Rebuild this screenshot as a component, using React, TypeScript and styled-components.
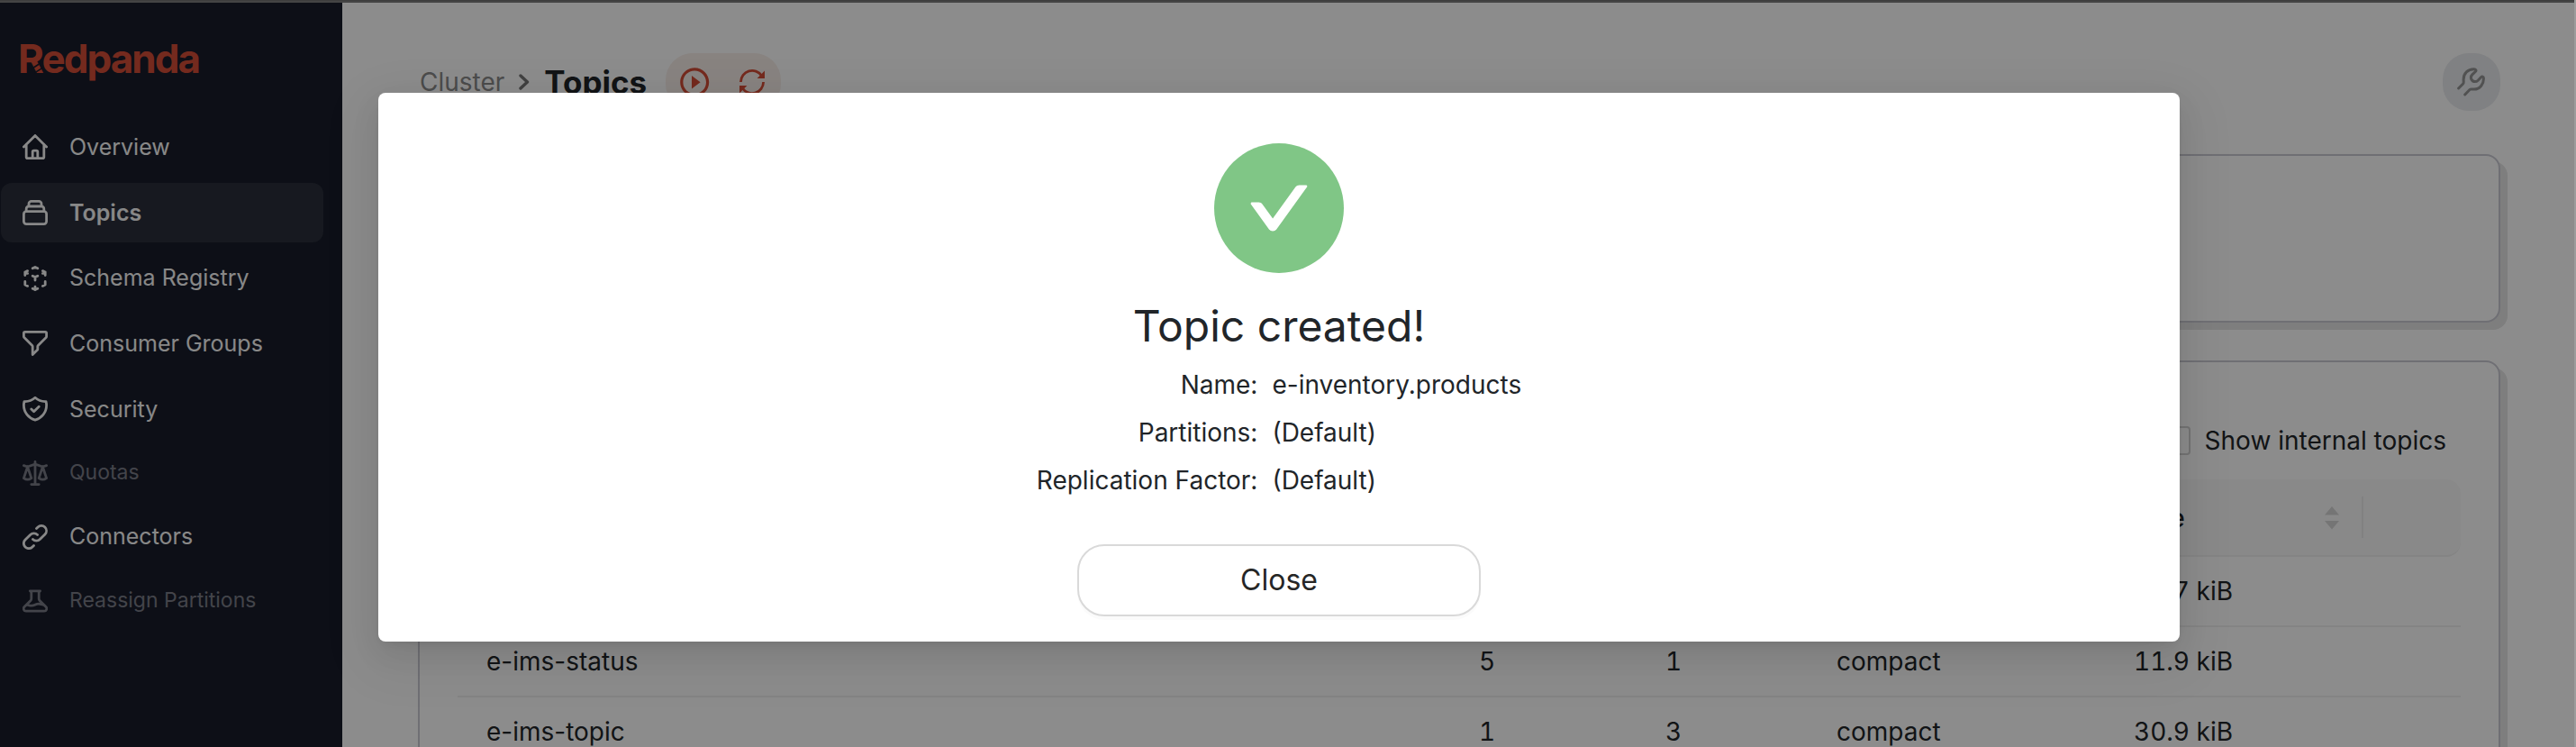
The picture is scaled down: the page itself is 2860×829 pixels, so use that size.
import type { ReactNode } from 'react';
import type { IconType } from 'react-icons';
import styled, { createGlobalStyle } from 'styled-components';
import {
  HiOutlineBeaker,
  HiOutlineCollection,
  HiOutlineCubeTransparent,
  HiOutlineFilter,
  HiOutlineHome,
  HiOutlineLink,
  HiOutlineScale,
  HiOutlineShieldCheck,
} from 'react-icons/hi';
import { MdPlayCircleOutline } from 'react-icons/md';

const GlobalStyle = createGlobalStyle`
  *, *::before, *::after {
    box-sizing: border-box;
  }
  body {
    margin: 0;
    font-family: Inter, sans-serif;
    font-size: 28px;
    line-height: 44px;
    color: #212529;
    background: #fff;
  }
`;

const Frame = styled.div`
  position: relative;
  display: flex;
  flex-direction: column;
  height: 829px;
  overflow: hidden;
  border-right: 2px solid #9c9c9c;
`;

const WindowEdge = styled.div`
  flex: none;
  height: 3px;
  background: #444;
  border-top: 1px solid #3d3d3d;
`;

const Layout = styled.div`
  display: flex;
  flex: 1;
  min-height: 0;
`;

/* Sidebar */

const Sidebar = styled.aside`
  flex: none;
  width: 380px;
  padding-top: 34px;
  background: #181c2a;
`;

const Logo = styled.div`
  position: relative;
  height: 56px;
  padding-left: 20px;
  font-size: 44px;
  font-weight: 700;
  line-height: 56px;
  letter-spacing: -1.95px;
  color: #d34e38;
`;

const TailStripes = styled.svg`
  position: absolute;
  left: 22px;
  top: 12px;
`;

const Nav = styled.nav`
  display: flex;
  flex-direction: column;
  gap: 6px;
  margin-top: 37px;
  padding: 0 21px 0 1px;
`;

const NavItem = styled.a<{ $active?: boolean; $disabled?: boolean }>`
  display: flex;
  align-items: center;
  height: ${(props) => (props.$disabled ? '63px' : '66.7px')};
  padding-left: 24px;
  border-radius: 12px;
  background: ${(props) => (props.$active ? '#2a2f3b' : 'transparent')};
  color: ${(props) => (props.$disabled ? '#7a7d88' : '#f7f7f7')};
  font-size: ${(props) => (props.$disabled ? '23px' : '25px')};
  font-weight: ${(props) => (props.$active ? 600 : 400)};
`;

const NavLabel = styled.span`
  margin-left: 24px;
  padding-bottom: 1px;
`;

/* Page */

const Page = styled.main`
  flex: 1;
  display: flex;
  flex-direction: column;
  padding: 56px 82px 0 84px;
`;

const PageHeader = styled.header`
  display: flex;
  align-items: center;
  height: 64px;
  padding-left: 2px;
`;

const Crumb = styled.span`
  color: #8a8a8a;
`;

const Chevron = styled.svg`
  margin: 0 16px 0 16px;
`;

const PageTitle = styled.h1`
  margin: 0;
  font-size: 35px;
  font-weight: 700;
`;

const RefreshPill = styled.div`
  display: flex;
  align-items: center;
  justify-content: space-between;
  width: 128px;
  height: 64px;
  margin-left: 21px;
  padding: 0 17px 0 13px;
  border-radius: 30px;
  background: #f8eee9;
  color: #d34e38;
`;

const ToolButton = styled.button`
  display: flex;
  align-items: center;
  justify-content: center;
  width: 64px;
  height: 64px;
  margin-left: auto;
  padding: 0;
  border: 0;
  border-radius: 29px;
  background: #e9ebee;
`;

const Card = styled.section<{ $height: number }>`
  flex: none;
  height: ${(props) => props.$height}px;
  margin-top: 48px;
  padding: 70px 42px 0;
  border: 2px solid #cbcbd4;
  border-radius: 16px;
  background: #fff;
  box-shadow: 8px 8px 0 #e5e5e5;

  & + & {
    margin-top: 42px;
  }
`;

const Toolbar = styled.label`
  display: flex;
  align-items: center;
  justify-content: flex-end;
  height: 34px;
  padding-right: 16px;
`;

const Checkbox = styled.span`
  width: 32px;
  height: 32px;
  margin-right: 16px;
  border: 2px solid #d3d3d3;
  border-radius: 4px;
`;

const columns = '1102px 207px 190px 330px 287px 1fr';

const TableHead = styled.div`
  display: grid;
  grid-template-columns: ${columns};
  align-items: center;
  height: 86px;
  margin-top: 26px;
  border-bottom: 2px solid #f0f0f0;
  border-radius: 16px;
  background: #fafafa;
  font-weight: 500;
`;

const HeadCell = styled.div<{ $divider?: boolean }>`
  display: flex;
  align-items: center;
  justify-content: space-between;
  height: 46px;
  padding: 1px 25px 0 32px;
  border-right: ${(props) => (props.$divider ? '2px solid #ebebeb' : '0')};
`;

const TableRow = styled.div`
  display: grid;
  grid-template-columns: ${columns};
  align-items: center;
  height: 78px;
  border-bottom: 2px solid #f0f0f0;
`;

const Cell = styled.div<{ $numeric?: boolean }>`
  padding-left: 32px;
  white-space: nowrap;
  font-variant-numeric: ${(props) => (props.$numeric ? 'tabular-nums' : 'normal')};
`;

/* Modal */

const Mask = styled.div`
  position: absolute;
  inset: 3px 0 0;
  padding: 100px 0 0 420px;
  background: rgba(0, 0, 0, 0.45);
`;

const Dialog = styled.div`
  display: flex;
  flex-direction: column;
  align-items: center;
  width: 2000px;
  height: 609px;
  padding-top: 56px;
  border-radius: 8px;
  background: #fff;
  box-shadow:
    0 6px 12px -8px rgba(0, 0, 0, 0.12),
    0 12px 32px 0 rgba(0, 0, 0, 0.08),
    0 18px 56px 16px rgba(0, 0, 0, 0.05);
`;

const DialogTitle = styled.h2`
  margin: 29px 0 9px;
  font-size: 48px;
  font-weight: 400;
  line-height: 60px;
`;

const Details = styled.dl`
  display: grid;
  grid-template-columns: auto auto;
  column-gap: 16px;
  margin: 0 0 44px;
  line-height: 53px;
`;

const DetailLabel = styled.dt`
  text-align: right;
`;

const DetailValue = styled.dd`
  margin: 0;
`;

const CloseButton = styled.button`
  width: 448px;
  height: 80px;
  padding: 0;
  border: 2px solid #d9d9d9;
  border-radius: 30px;
  background: #fff;
  box-shadow: 0 4px 0 rgba(0, 0, 0, 0.016);
  color: #262626;
  font: 400 32px/44px Inter, sans-serif;
`;

interface NavEntry {
  label: string;
  icon: IconType;
  active?: boolean;
  disabled?: boolean;
}

const navEntries: NavEntry[] = [
  { label: 'Overview', icon: HiOutlineHome },
  { label: 'Topics', icon: HiOutlineCollection, active: true },
  { label: 'Schema Registry', icon: HiOutlineCubeTransparent },
  { label: 'Consumer Groups', icon: HiOutlineFilter },
  { label: 'Security', icon: HiOutlineShieldCheck },
  { label: 'Quotas', icon: HiOutlineScale, disabled: true },
  { label: 'Connectors', icon: HiOutlineLink },
  { label: 'Reassign Partitions', icon: HiOutlineBeaker, disabled: true },
];

const topics = [
  { name: 'e-ims-products', partitions: 1, replicas: 1, policy: 'compact', size: '13.7 kiB' },
  { name: 'e-ims-status', partitions: 5, replicas: 1, policy: 'compact', size: '11.9 kiB' },
  { name: 'e-ims-topic', partitions: 1, replicas: 3, policy: 'compact', size: '30.9 kiB' },
];

const SyncIcon = () => (
  <svg width="30" height="30" viewBox="0 0 30 30">
    <g fill="none" stroke="currentColor" strokeWidth="2.8">
      <path d="M2.4 15A12.7 12.9 0 0 1 25.6 8" />
      <path d="M27.6 15A12.7 12.9 0 0 1 4.4 22" />
    </g>
    <path fill="currentColor" d="M29 2.6V11H20.6zM1 27.4V19h8.4z" />
  </svg>
);

const WrenchIcon = () => (
  <svg
    width="32"
    height="32"
    viewBox="0 0 32 32"
    fill="none"
    stroke="#949494"
    strokeWidth="3"
    strokeLinecap="round"
    strokeLinejoin="round"
  >
    <path d="M1.6 23 6.6 18C7.6 17 7.1 15.5 7.1 13.5 7 6.3 12 1.7 18.8 1.8 20.9 1.8 21.6 3.3 20.3 4.5L17 7.6C13.6 11 16.2 15.6 19.8 15.6 21.4 15.6 22.4 15 23.2 14.2L26.5 10.7C27.8 9.4 29.3 10 29.4 11.6 29.8 18 25.5 24.1 18.8 24.1 16.8 24.1 15 23.5 14 24.5L8.7 30" />
  </svg>
);

const SuccessIcon = () => (
  <svg width="144" height="144" viewBox="64 64 896 896">
    <circle cx="512" cy="512" r="448" fill="#80c686" />
    <path
      fill="#fff"
      d="M699 353h-46.9c-10.2 0-19.9 4.9-25.9 13.3L469 584.3l-71.2-98.8c-6-8.3-15.6-13.3-25.9-13.3H325c-6.5 0-10.3 7.4-6.5 12.7l124.6 172.8a31.8 31.8 0 0 0 51.7 0l210.6-292c3.9-5.3.1-12.7-6.4-12.7z"
    />
  </svg>
);

const SortIcon = () => (
  <svg width="16" height="26" viewBox="0 0 16 26" fill="#d5d5d5">
    <path d="M8 0 16 9.5H0zM8 25.5 16 16H0z" />
  </svg>
);

const Detail = ({ label, children }: { label: string; children: ReactNode }) => (
  <>
    <DetailLabel>{label}:</DetailLabel>
    <DetailValue>{children}</DetailValue>
  </>
);

const App = () => (
  <Frame>
    <GlobalStyle />
    <WindowEdge />
    <Layout>
      <Sidebar>
        <Logo>
          Redpanda
          <TailStripes width="30" height="36" viewBox="0 0 30 36" fill="none">
            <path d="M13 27.5 21.5 22M16.5 31.8 25.5 26.2" stroke="#181c2a" strokeWidth="1.5" />
          </TailStripes>
        </Logo>
        <Nav>
          {navEntries.map(({ label, icon: Icon, active, disabled }) => (
            <NavItem key={label} $active={active} $disabled={disabled}>
              <Icon size={28} viewBox="2 2 20 20" />
              <NavLabel>{label}</NavLabel>
            </NavItem>
          ))}
        </Nav>
      </Sidebar>

      <Page>
        <PageHeader>
          <Crumb>Cluster</Crumb>
          <Chevron width="12" height="20" viewBox="0 0 12 20" fill="none">
            <path
              d="M2 3 9.5 10 2 17"
              stroke="#777"
              strokeWidth="3.4"
              strokeLinecap="round"
              strokeLinejoin="round"
            />
          </Chevron>
          <PageTitle>Topics</PageTitle>
          <RefreshPill>
            <MdPlayCircleOutline size={38.4} />
            <SyncIcon />
          </RefreshPill>
          <ToolButton>
            <WrenchIcon />
          </ToolButton>
        </PageHeader>

        <Card $height={187} />

        <Card $height={600}>
          <Toolbar>
            <Checkbox />
            Show internal topics
          </Toolbar>
          <TableHead>
            <HeadCell>Name</HeadCell>
            <HeadCell>Partitions</HeadCell>
            <HeadCell>Replicas</HeadCell>
            <HeadCell>CleanupPolicy</HeadCell>
            <HeadCell $divider>
              Size
              <SortIcon />
            </HeadCell>
          </TableHead>
          {topics.map((topic) => (
            <TableRow key={topic.name}>
              <Cell>{topic.name}</Cell>
              <Cell $numeric>{topic.partitions}</Cell>
              <Cell $numeric>{topic.replicas}</Cell>
              <Cell>{topic.policy}</Cell>
              <Cell $numeric>{topic.size}</Cell>
            </TableRow>
          ))}
        </Card>
      </Page>
    </Layout>

    <Mask>
      <Dialog>
        <SuccessIcon />
        <DialogTitle>Topic created!</DialogTitle>
        <Details>
          <Detail label="Name">e-inventory.products</Detail>
          <Detail label="Partitions">(Default)</Detail>
          <Detail label="Replication Factor">(Default)</Detail>
        </Details>
        <CloseButton>Close</CloseButton>
      </Dialog>
    </Mask>
  </Frame>
);

export default App;
